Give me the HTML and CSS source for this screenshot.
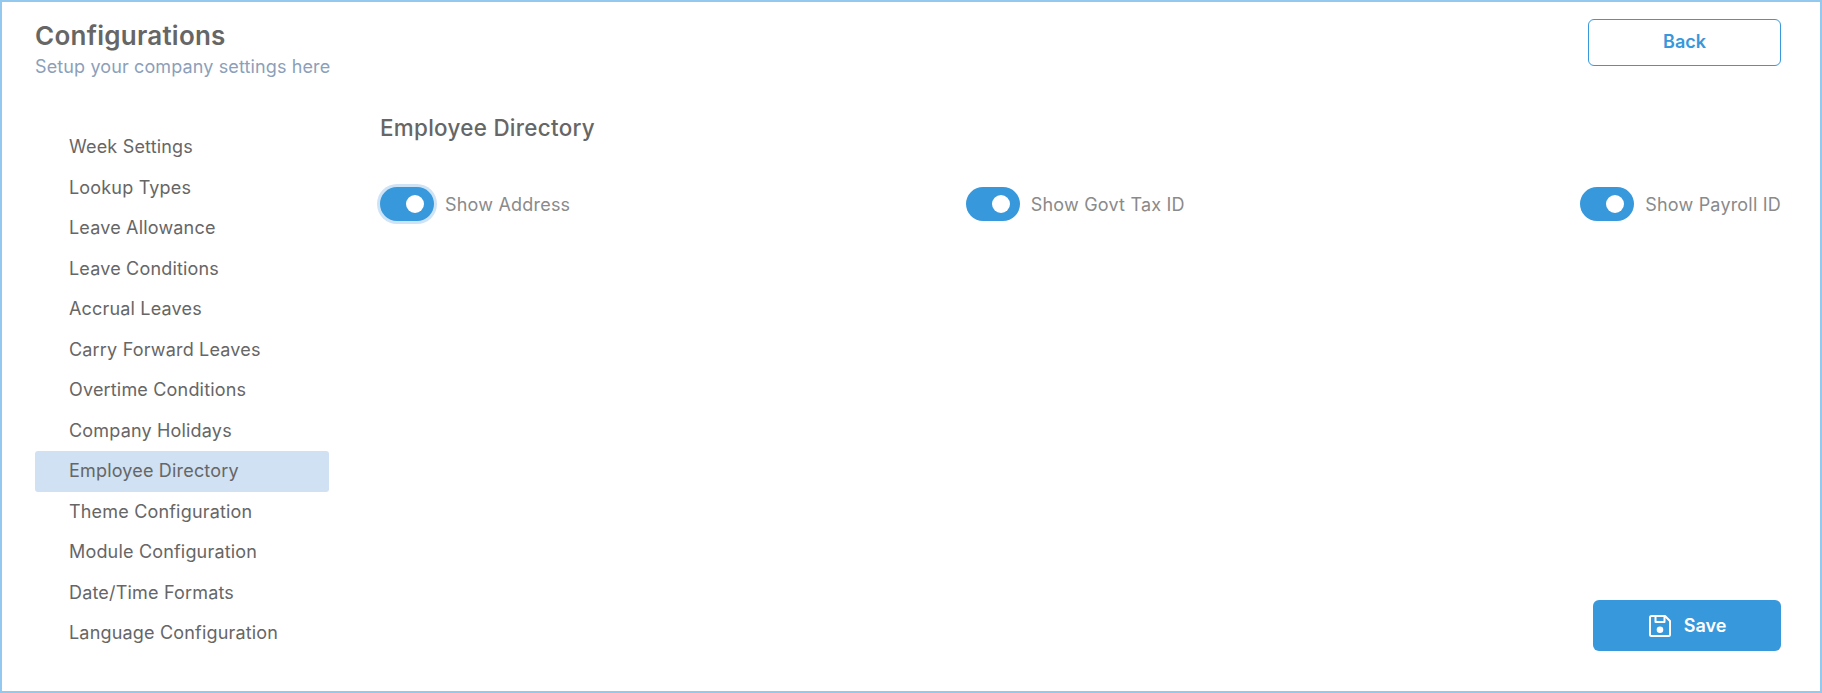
FILE: index.html
```html
<!DOCTYPE html>
<html lang="en">
<head>
    <meta charset="UTF-8">
    <meta name="viewport" content="width=device-width, initial-scale=1.0">
    <title>Configurations</title>
    <link rel="stylesheet" href="styles.css">
</head>
<body>
    <div class="card">
        <div class="page-head">
            <div>
                <h1>Configurations</h1>
                <p class="subtitle">Setup your company settings here</p>
            </div>
            <button type="button" class="btn-back">Back</button>
        </div>
        <div class="page-body">
            <nav class="side-nav">
                <a>Week Settings</a>
                <a>Lookup Types</a>
                <a>Leave Allowance</a>
                <a>Leave Conditions</a>
                <a>Accrual Leaves</a>
                <a>Carry Forward Leaves</a>
                <a>Overtime Conditions</a>
                <a>Company Holidays</a>
                <a class="active">Employee Directory</a>
                <a>Theme Configuration</a>
                <a>Module Configuration</a>
                <a>Date/Time Formats</a>
                <a>Language Configuration</a>
            </nav>
            <main class="panel">
                <h2>Employee Directory</h2>
                <div class="toggles">
                    <label class="toggle-row"><span class="switch focused"></span>Show Address</label>
                    <label class="toggle-row"><span class="switch"></span>Show Govt Tax ID</label>
                    <label class="toggle-row"><span class="switch"></span>Show Payroll ID</label>
                </div>
                <div class="panel-foot">
                    <button type="button" class="btn-save">
                        <svg width="24" height="24" viewBox="0 0 24 24" fill="none" stroke="currentColor" stroke-width="2" stroke-linejoin="round">
                            <path d="M3.5 2h13.5l5 5v13.5a1.5 1.5 0 0 1-1.5 1.5h-17a1.5 1.5 0 0 1-1.5-1.5v-17a1.5 1.5 0 0 1 1.5-1.5z"/>
                            <path d="M7.5 2v6h9v-6"/>
                            <circle cx="12" cy="15.8" r="3.3" fill="currentColor" stroke="none"/>
                        </svg>
                        Save
                    </button>
                </div>
            </main>
        </div>
    </div>
</body>
</html>
```

FILE: styles.css
```css
* { box-sizing: border-box; }
html, body { height: 100%; }
body { margin: 0; font-family: Inter, "Noto Sans", sans-serif; color: #666; background: #fff; }

.card { height: 693px; border: 2px solid #93c9ee; padding: 17px 39px 40px 33px; display: flex; flex-direction: column; overflow: hidden; }

.page-head { display: flex; justify-content: space-between; align-items: flex-start; }
h1 { margin: 0; font-size: 26px; line-height: 34px; font-weight: 600; letter-spacing: .25px; color: #666; }
.subtitle { margin: 2px 0 0; font-size: 18px; line-height: 24px; letter-spacing: .12px; color: #8c9fb9; }
.btn-back { width: 193px; height: 47px; padding-bottom: 3px; background: #fff; border: 1px solid #3798dc; border-radius: 6px; color: #3798dc; font: 600 18px Inter, sans-serif; }

.page-body { flex: 1; min-height: 0; display: flex; gap: 51px; }

.side-nav { width: 294px; flex-shrink: 0; padding-top: 48px; }
.side-nav a { display: block; height: 40.5px; line-height: 40.5px; padding-left: 34px; font-size: 18px; letter-spacing: .18px; color: #666; border-radius: 3px; }
.side-nav a.active { background: #cfe1f2; }

.panel { flex: 1; display: flex; flex-direction: column; }
h2 { margin: 35px 0 0; font-size: 22.4px; line-height: 28px; font-weight: 500; letter-spacing: .3px; color: #666; }
.toggles { display: flex; justify-content: space-between; margin-top: 45px; }
.toggle-row { display: flex; align-items: center; gap: 11px; font-size: 18px; letter-spacing: .2px; color: #8a8a8a; }
.switch { width: 54px; height: 34px; border-radius: 17px; background: #3798dc; display: flex; align-items: center; justify-content: flex-end; padding-right: 10px; }
.switch::after { content: ""; width: 18px; height: 18px; border-radius: 50%; background: #fff; }
.switch.focused { box-shadow: 0 0 0 3px #cfe3f7; }

.panel-foot { margin-top: auto; display: flex; justify-content: flex-end; }
.btn-save { width: 188px; height: 51px; display: flex; align-items: center; justify-content: center; gap: 12px; background: #3798dc; border: 0; border-radius: 6px; color: #fff; font: 600 18px Inter, sans-serif; }
```
